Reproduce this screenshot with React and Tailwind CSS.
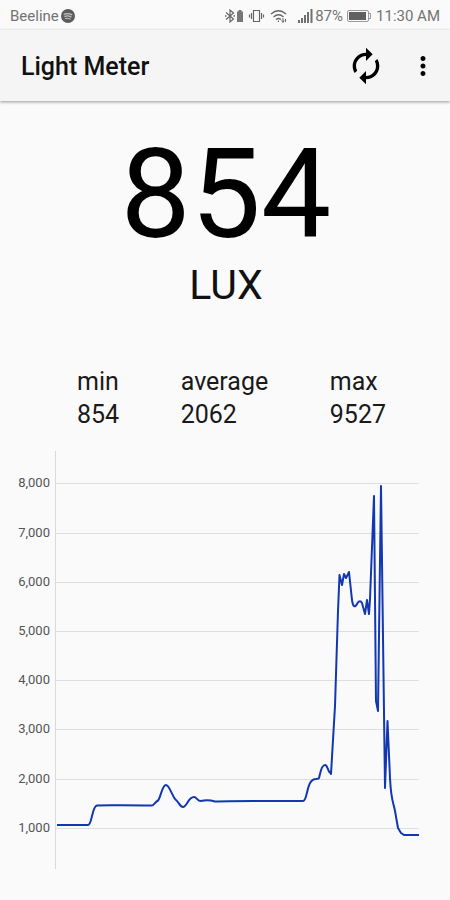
import { MdAutorenew, MdMoreVert } from "react-icons/md";

const stats = [
  { label: "min", value: 854 },
  { label: "average", value: 2062 },
  { label: "max", value: 9527 },
];

const ticks = [8000, 7000, 6000, 5000, 4000, 3000, 2000, 1000];

// 49px per 1,000 lux on the vertical axis
const tickY = (lux) => Math.round(426 - (lux / 1000) * 49.2);

const linePath =
  "M57 374H88C92 374 92 355 97 354.500C110 354 120 354.500 152 354.500C154 354.500 155 351 158 349.500" +
  "C161 346 162 334 166 334C169 334 171 342 175 348C179 351 180 356 183 356C187 356 188 346 194 346" +
  "C197 346 197 350 201 350C205 349 210 349 215 350.500C230 349.500 250 350 303 350" +
  "C308 350 306 328 316 328C320 327 318 328 319 327C320 324 321 314 325 314C328 314 327 320 331 323" +
  "L335 255L338 160L339.500 124L342 134L344 123L346 127L349 121L352 149" +
  "C353 156 355 157 357 153C359 149 361 150 362 152L365 163L367 149L369 163L370 148L374 45" +
  "L376 250L378 260L381 35L385 337L387.500 270L390 327C391 349 393 350 395 360" +
  "L398 377L401 382L404 384H419";

function StatusBar() {
  return (
    <div className="flex h-[30px] items-center justify-between bg-[#fafafa] px-2.5 pt-0.5 text-[15px] text-[#737373]">
      <div className="flex items-center gap-0.5">
        <span>Beeline</span>
        <svg width="14" height="14" viewBox="0 0 14 14" aria-hidden="true">
          <circle cx="7" cy="7" r="7" fill="#5c5c5c" />
          <g fill="none" stroke="#c4c4c4" strokeLinecap="round">
            <path d="M3.300 5.200Q7 3.800 10.700 5.600" strokeWidth="1.400" />
            <path d="M3.800 7.400Q7 6.300 10 7.900" strokeWidth="1.200" />
            <path d="M4.300 9.500Q7 8.600 9.300 10" />
          </g>
        </svg>
      </div>
      <div className="flex items-center">
        <svg width="63" height="16" viewBox="0 0 63 16" fill="none" stroke="#666" aria-hidden="true">
          <path d="M1 4.500L8.500 11L5 14V2L8.500 5L1 11.500" strokeWidth="1.200" />
          <path d="M0 8h1.500M8.500 8h1.500" strokeWidth="1.500" />
          <path d="M12 3.500h1.500V2h3v1.500H18V14h-6z" fill="#777" stroke="none" />
          <path d="M28.500 2.500h6v11h-6zM26.500 5v6M36.500 5v6M24.500 6.500v3M38.500 6.500v3" strokeWidth="1.200" />
          <path d="M46 6Q53.500-.5 61 6M48.500 9Q53.500 4.500 58.500 9M51 11.500Q53.500 9.500 56 11.500" strokeWidth="1.300" />
          <path d="M53.500 14v-1.500M58 10v4M60.500 14v-3M56.500 12.500l1.500 2 1-2" />
        </svg>
        <svg className="ml-2.5" width="15" height="14" viewBox="0 0 15 14" fill="#707070" aria-hidden="true">
          <path d="M0 11h2v3H0zM3 9h2v5H3zM6 6h2v8H6zM9 3h2v11H9zM12.500 0h2v14h-2z" />
        </svg>
        <span className="ml-0.5">87%</span>
        <svg className="ml-1" width="25" height="12" viewBox="0 0 25 12" aria-hidden="true">
          <rect x=".5" y=".5" width="21" height="11" rx="1.500" fill="none" stroke="#999" />
          <rect x="2" y="2" width="17" height="8" fill="#606060" />
          <path d="M22 3.500h1.500v5H22" fill="none" stroke="#999" />
        </svg>
        <span className="ml-1">11:30 AM</span>
      </div>
    </div>
  );
}

function LuxChart() {
  return (
    <svg
      viewBox="0 0 450 420"
      className="block w-full"
      role="img"
      aria-label="Light level over time"
    >
      {ticks.map((lux) => (
        <g key={lux}>
          <path d={`M56 ${tickY(lux) + 0.5}H419`} stroke="#dedede" />
          <text x="50" y={tickY(lux) + 4} textAnchor="end" fontSize="13" fill="#555">
            {lux.toLocaleString("en-US")}
          </text>
        </g>
      ))}
      <path d="M55.500 0V418" stroke="#dadada" />
      <path d={linePath} fill="none" stroke="#1237b0" strokeWidth="2" strokeLinejoin="round" />
    </svg>
  );
}

export default function App() {
  return (
    <div className="min-h-screen bg-[#fafafa] font-[Roboto,sans-serif] text-[#1a1a1a]">
      <StatusBar />

      <header className="flex h-[71px] items-center bg-[#f5f5f5] pr-3 pl-[21px] shadow-[0_1px_3px_rgba(0,0,0,0.4)]">
        <h1 className="flex-1 pt-0.5 text-[25px] font-medium text-[#111]">Light Meter</h1>
        <button type="button" aria-label="Reset" className="text-black">
          <MdAutorenew size={40} />
        </button>
        <button type="button" aria-label="More options" className="ml-[22px] text-black">
          <MdMoreVert size={30} />
        </button>
      </header>

      <main>
        <div className="flex flex-col items-center pt-8 text-black">
          <div className="pl-0.5 text-[125px] leading-[124px]">854</div>
          <div className="pl-0.5 text-[41px] leading-14 text-[#111]">LUX</div>
        </div>

        <dl className="mt-13 flex justify-between pr-16 pl-[77px] text-[25px] leading-[33px]">
          {stats.map((s) => (
            <div key={s.label}>
              <dt>{s.label}</dt>
              <dd>{s.value}</dd>
            </div>
          ))}
        </dl>

        <div className="mt-5">
          <LuxChart />
        </div>
      </main>
    </div>
  );
}
